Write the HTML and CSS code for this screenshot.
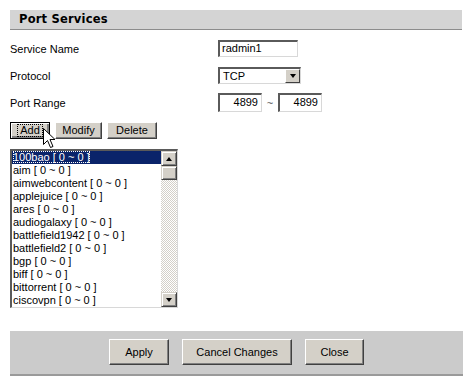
FILE: index.html
```html
<!DOCTYPE html>
<html>
<head>
<meta charset="utf-8">
<link rel="stylesheet" href="styles.css">
</head>
<body>
<div class="page">
  <div class="section-title">Port Services</div>
  <div class="form">
    <div class="label">Service Name</div>
    <div class="field"><span class="input name-input">radmin1</span></div>
    <div class="label">Protocol</div>
    <div class="field">
      <span class="select"><span class="select-text">TCP</span><span class="select-btn"><span class="tri-down"></span></span></span>
    </div>
    <div class="label">Port Range</div>
    <div class="field port-field">
      <span class="input port-input">4899</span><span class="tilde">~</span><span class="input port-input">4899</span>
    </div>
  </div>
  <div class="btn-row">
    <span class="btn small focus"><span class="focus-ring">Add</span></span>
    <span class="btn small">Modify</span>
    <span class="btn small">Delete</span>
    <svg class="cursor" width="13" height="21" viewBox="0 0 13 21"><path d="M0.5 0.5 L0.5 16.5 L4.5 12.5 L7.5 19.5 L10 18.5 L7 11.5 L12 11.5 Z" fill="#fff" stroke="#000" stroke-width="1"/></svg>
  </div>
  <div class="listbox">
    <ul class="items">
      <li class="sel"><span class="sel-text">100bao [ 0 ~ 0 ]</span></li>
      <li>aim [ 0 ~ 0 ]</li>
      <li>aimwebcontent [ 0 ~ 0 ]</li>
      <li>applejuice [ 0 ~ 0 ]</li>
      <li>ares [ 0 ~ 0 ]</li>
      <li>audiogalaxy [ 0 ~ 0 ]</li>
      <li>battlefield1942 [ 0 ~ 0 ]</li>
      <li>battlefield2 [ 0 ~ 0 ]</li>
      <li>bgp [ 0 ~ 0 ]</li>
      <li>biff [ 0 ~ 0 ]</li>
      <li>bittorrent [ 0 ~ 0 ]</li>
      <li>ciscovpn [ 0 ~ 0 ]</li>
    </ul>
    <div class="scrollbar">
      <span class="sb-btn"><span class="tri-up"></span></span>
      <span class="sb-thumb"></span>
      <span class="sb-track"></span>
      <span class="sb-btn"><span class="tri-down"></span></span>
    </div>
  </div>
  <div class="footer">
    <span class="btn big apply">Apply</span>
    <span class="btn big cancel">Cancel Changes</span>
    <span class="btn big close">Close</span>
  </div>
</div>
</body>
</html>
```
FILE: styles.css
```css
* { box-sizing: border-box; }
html, body { margin: 0; padding: 0; background: #fff; }
body { font-family: "Liberation Sans", Arial, sans-serif; font-size: 11px; color: #000; }
.page { padding: 10px 10px 0 10px; width: 473px; }
.section-title {
  height: 20px;
  background: #d4d4d4;
  border-bottom: 1px solid #8c8c8c;
  font-family: "DejaVu Sans", Verdana, sans-serif;
  font-weight: bold;
  font-size: 11.5px;
  letter-spacing: 0.2px;
  padding-left: 9px;
  line-height: 19px;
  width: 452px;
}
.form {
  display: grid;
  grid-template-columns: 208px auto;
  grid-auto-rows: 27px;
  margin-top: 5px;
  align-items: center;
}
.label { line-height: 16px; }
.input {
  display: inline-block;
  height: 17px;
  border-style: solid;
  border-width: 2px 1px 1px 2px;
  border-color: #5a5a5a #d8d8d8 #d8d8d8 #5a5a5a;
  background: #fff;
  line-height: 13px;
  padding: 0 2px;
  color: #000;
}
.name-input { width: 80px; }
.select {
  display: inline-flex;
  width: 83px;
  height: 17px;
  border-style: solid;
  border-width: 2px 1px 1px 2px;
  border-color: #5a5a5a #d8d8d8 #d8d8d8 #5a5a5a;
  background: #fff;
  align-items: center;
}
.select-text { flex: 1; padding-left: 3px; line-height: 13px; }
.select-btn {
  width: 15px; height: 14px;
  background: #d4d0c8;
  border: 1px solid;
  border-color: #fff #404040 #404040 #fff;
  display: flex; align-items: center; justify-content: center;
}
.tri-down { width: 0; height: 0; border-left: 3.5px solid transparent; border-right: 3.5px solid transparent; border-top: 4px solid #000; }
.tri-up { width: 0; height: 0; border-left: 3.5px solid transparent; border-right: 3.5px solid transparent; border-bottom: 4px solid #000; }
.port-field { display: flex; align-items: center; }
.port-input { width: 44px; height: 19px; text-align: right; line-height: 15px; padding-right: 3px; }
.tilde { width: 16px; text-align: center; color: #555; }
.btn-row {
  display: flex;
  gap: 5px;
  margin-top: 6px;
  position: relative;
  height: 17px;
}
.btn {
  display: inline-flex;
  align-items: center;
  justify-content: center;
  background: #d4d0c8;
  border: 1px solid;
  border-color: #fff #404040 #404040 #fff;
  box-shadow: inset -1px -1px 0 #808080;
  color: #000;
}
.btn.small { height: 17px; padding: 0; line-height: 13px; }
.btn.small:nth-child(1) { width: 40px; }
.btn.small:nth-child(2) { width: 47px; }
.btn.small:nth-child(3) { width: 50px; }
.btn.focus { border: 1px solid #000; box-shadow: inset 1px 1px 0 #fff, inset -2px -2px 0 #808080; }
.focus-ring { outline: 1px dotted #000; outline-offset: 0px; padding: 0 2px; line-height: 11px; }
.cursor { position: absolute; left: 33px; top: 6px; }
.listbox {
  display: flex;
  margin-top: 10px;
  width: 168px;
  height: 159px;
  border-style: solid;
  border-width: 2px 1px 1px 2px;
  border-color: #5a5a5a #d8d8d8 #d8d8d8 #5a5a5a;
  background: #fff;
}
.items { list-style: none; margin: 0; padding: 0; flex: 1; overflow: hidden; }
.items li { height: 13px; line-height: 13px; padding-left: 1px; white-space: nowrap; }
.items li.sel { background: #0a246a; color: #fff; }
.sel-text { outline: 1px dotted #fff; outline-offset: -1px; }
.scrollbar { width: 16px; display: flex; flex-direction: column; }
.sb-btn, .sb-thumb {
  height: 15px;
  background: #d4d0c8;
  border: 1px solid;
  border-color: #d4d0c8 #404040 #404040 #d4d0c8;
  box-shadow: inset 1px 1px 0 #fff, inset -1px -1px 0 #808080;
  display: flex; align-items: center; justify-content: center;
}
.sb-thumb { height: 14px; }
.sb-track {
  flex: 1;
  background-color: #fff;
  background-image: repeating-conic-gradient(#d4d0c8 0 25%, #fff 0 50%);
  background-size: 2px 2px;
}
.footer {
  margin-top: 23px;
  width: 453px;
  height: 45px;
  background: #cbcbcb;
  border-bottom: 2px solid #9a9a9a;
  display: flex;
  align-items: center;
  justify-content: center;
  gap: 13px;
  padding-bottom: 1px;
}
.btn.big { height: 26px; font-size: 11px; }
.apply { width: 60px; }
.cancel { width: 110px; }
.close { width: 59px; }
```
